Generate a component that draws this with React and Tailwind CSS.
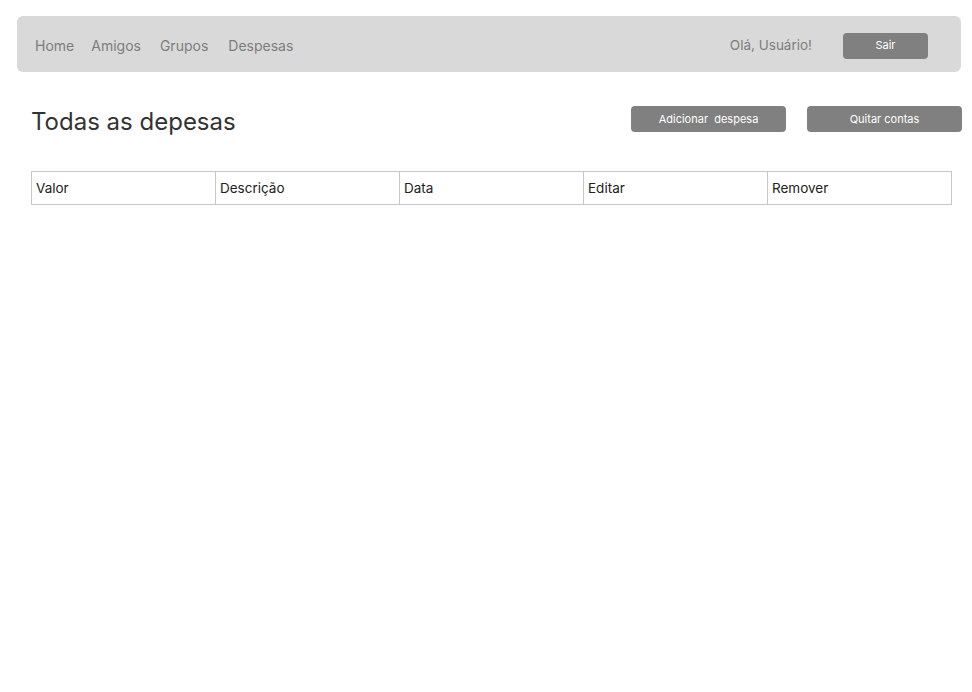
export default function App() {
  const cols = ["Valor", "Descrição", "Data", "Editar", "Remover"];
  return (
    <div className="min-h-screen bg-white pt-4 pl-[17px] pr-[11px] font-['Inter',sans-serif]">
      {/* Navbar */}
      <nav className="flex items-center h-[56px] rounded-md bg-[#d9d9d9] pl-[18px] pr-[33px] pt-[3px]">
        <div className="flex items-center text-[14px] text-[#7d7d7d]">
          <span>Home</span>
          <span className="ml-[17px]">Amigos</span>
          <span className="ml-[19px]">Grupos</span>
          <span className="ml-[20px]">Despesas</span>
        </div>
        <div className="ml-auto flex items-center">
          <span className="text-[13.5px] text-[#7d7d7d]">Olá, Usuário!</span>
          <button className="ml-[31px] w-[85px] h-[26px] rounded bg-[#808080] text-white text-[11px]">
            Sair
          </button>
        </div>
      </nav>

      {/* Title + actions */}
      <div className="flex items-start mt-[33px] pl-[14px] mr-[-1px]">
        <h1 className="text-[24px] leading-8 text-[#333333] mt-[1px]">Todas as depesas</h1>
        <div className="ml-auto flex gap-[21px] mt-[1px]">
          <button className="w-[155px] h-[26px] rounded bg-[#808080] text-white text-[11px]">
            Adicionar&nbsp; despesa
          </button>
          <button className="w-[155px] h-[26px] rounded bg-[#808080] text-white text-[11px]">
            Quitar contas
          </button>
        </div>
      </div>

      {/* Table */}
      <table className="mt-[33px] ml-[14px] border-collapse w-[921px] table-fixed">
        <thead>
          <tr>
            {cols.map((c) => (
              <th
                key={c}
                className="h-[33px] border border-[#c6c6c6] px-[4px] text-left font-normal text-[13.5px] text-[#222222]"
              >
                {c}
              </th>
            ))}
          </tr>
        </thead>
      </table>
    </div>
  );
}
